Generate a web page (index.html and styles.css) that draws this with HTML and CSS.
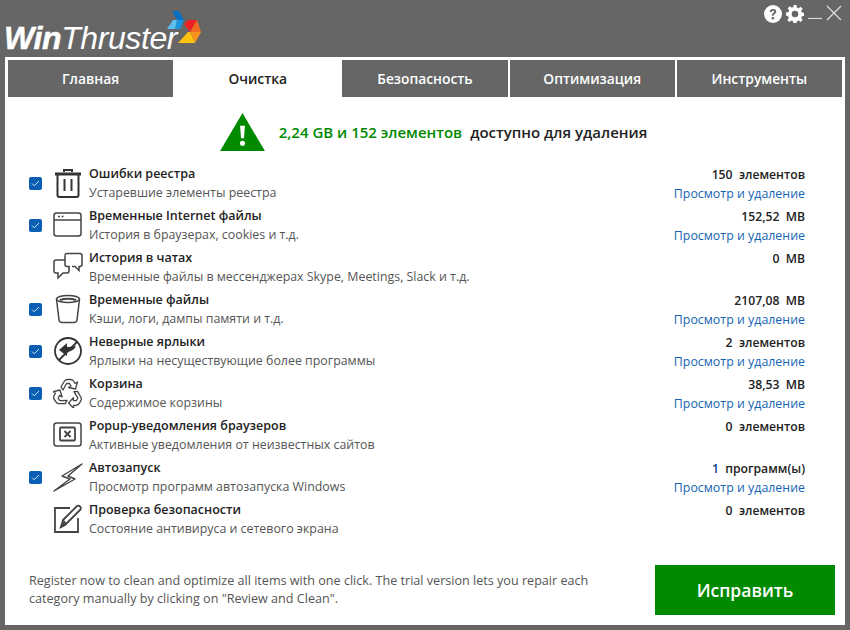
FILE: index.html
```html
<!DOCTYPE html>
<html lang="ru">
<head>
    <meta charset="UTF-8">
    <title>WinThruster</title>
    <link rel="stylesheet" href="styles.css">
</head>
<body>
    <header class="title_bar">
        <div class="logo">
            <span class="logo_text"><b>Win</b>Thruster</span>
            <svg class="logo_mark" width="34" height="33" viewBox="0 0 34 33">
                <polygon points="5,0 12,0 17,9 10,9" fill="#0b6fc0"/>
                <polygon points="10,9 17,9 13,18 8,18" fill="#1b95e0"/>
                <polygon points="0,18 6,9 10,9 8,18" fill="#5cc0ee"/>
                <polygon points="17,13 21,9 30,9 23,21" fill="#ee2024"/>
                <polygon points="30,9 34,21 23,21" fill="#f26a21"/>
                <polygon points="23,21 34,21 28,32" fill="#f7941d"/>
                <polygon points="11,32 21,21 23,21 28,32" fill="#ffc20e"/>
            </svg>
        </div>
        <div class="window_btns">
            <svg width="18" height="18" viewBox="0 0 18 18"><circle cx="9" cy="9" r="9" fill="#fff"/><path d="M5.800 7c0-2 1.400-3 3.300-3s3.200 1 3.200 2.700c0 2.300-2.700 2.200-2.700 4.100H7.900c0-2.800 2.300-2.700 2.300-4 0-.7-.5-1.100-1.200-1.100-.8 0-1.200.5-1.300 1.300z" fill="#666"/><circle cx="8.900" cy="13.300" r="1.300" fill="#666"/></svg>
            <svg width="18" height="18" viewBox="0 0 18 18"><path d="M7.500 0h3l.4 2.500 1.600.7 2.100-1.500 2.100 2.100-1.500 2.100.7 1.600 2.500.4v3l-2.500.4-.7 1.600 1.500 2.100-2.100 2.100-2.100-1.500-1.600.7-.4 2.500h-3l-.4-2.500-1.600-.7-2.100 1.500-2.100-2.100 1.500-2.100-.7-1.600L0 10.500v-3l2.500-.4.7-1.600-1.500-2.100 2.100-2.100 2.100 1.500 1.600-.7z" fill="#fff"/><circle cx="9" cy="9" r="3.300" fill="#666"/></svg>
            <svg width="14" height="14" viewBox="0 0 14 14"><path d="M0 13.500h14" stroke="#ddd" stroke-width="1.200"/></svg>
            <svg width="16" height="16" viewBox="0 0 16 16"><path d="M1 1l14 14M15 1L1 15" stroke="#ddd" stroke-width="1.300"/></svg>
        </div>
    </header>

    <main class="panel">
        <nav class="tabs">
            <div class="tab">Главная</div>
            <div class="tab tab_active">Очистка</div>
            <div class="tab">Безопасность</div>
            <div class="tab">Оптимизация</div>
            <div class="tab">Инструменты</div>
        </nav>

        <div class="summary">
            <svg width="45" height="39" viewBox="0 0 46 40"><polygon points="23,0 46,39 0,39" fill="#008a00"/><path d="M20.500 13h5l-1 13h-3z" fill="#fff"/><circle cx="23" cy="31" r="2.600" fill="#fff"/></svg>
            <span class="summary_count">2,24 GB и 152 элементов</span>
            <span>доступно для удаления</span>
        </div>

        <section class="rows">
            <div class="row">
                <span class="check"><svg width="9" height="7" viewBox="0 0 9 7"><path d="M1 3.500l2.300 2.300L8 1" fill="none" stroke="#cfe3f7" stroke-width="1"/></svg></span>
                <svg class="icon" width="30" height="30" viewBox="0 0 30 30" fill="none" stroke="#333" stroke-width="2"><path d="M2 6h26" stroke-width="3"/><path d="M11 4V2h8v2" stroke-width="2"/><path d="M4.500 7v20q0 2 2 2h17q2 0 2-2V7"/><path d="M11.500 11v12M18.500 11v12"/></svg>
                <div class="row_text"><div class="row_title">Ошибки реестра</div><div class="row_sub">Устаревшие элементы реестра</div></div>
                <div class="row_right"><div class="row_value">150&nbsp; элементов</div><a class="row_link">Просмотр и удаление</a></div>
            </div>
            <div class="row">
                <span class="check"><svg width="9" height="7" viewBox="0 0 9 7"><path d="M1 3.500l2.300 2.300L8 1" fill="none" stroke="#cfe3f7" stroke-width="1"/></svg></span>
                <svg class="icon" width="30" height="30" viewBox="0 0 30 30" fill="none" stroke="#444" stroke-width="1.500"><rect x="1" y="3" width="27" height="23" rx="2.500"/><path d="M1 10h27"/><path d="M5 6.500h2M8.500 6.500h2" stroke-width="1.300"/></svg>
                <div class="row_text"><div class="row_title">Временные Internet файлы</div><div class="row_sub">История в браузерах, cookies и т.д.</div></div>
                <div class="row_right"><div class="row_value">152,52&nbsp; MB</div><a class="row_link">Просмотр и удаление</a></div>
            </div>
            <div class="row">
                <span class="check check_off"></span>
                <svg class="icon" width="30" height="30" viewBox="0 0 30 30" fill="none" stroke="#444" stroke-width="1.500"><path d="M12 3.500q0-2 2-2h13q2 0 2 2v9q0 2-2 2h-1v4l-4-4h-3"/><path d="M12 8H3q-2 0-2 2v9q0 2 2 2h2v5l5-5h4q2 0 2-2v-4" /><path d="M12 3.500v9q0 2 2 2h3"/></svg>
                <div class="row_text"><div class="row_title">История в чатах</div><div class="row_sub">Временные файлы в мессенджерах Skype, Meetings, Slack и т.д.</div></div>
                <div class="row_right"><div class="row_value">0&nbsp; MB</div></div>
            </div>
            <div class="row">
                <span class="check"><svg width="9" height="7" viewBox="0 0 9 7"><path d="M1 3.500l2.300 2.300L8 1" fill="none" stroke="#cfe3f7" stroke-width="1"/></svg></span>
                <svg class="icon" width="30" height="30" viewBox="0 0 30 30" fill="none" stroke="#444" stroke-width="1.500"><path d="M3.500 5l2.500 21q.3 2.500 3 2.500h12q2.700 0 3-2.500l2.500-21"/><ellipse cx="15" cy="5" rx="11.500" ry="3.500"/><path d="M7 6q8-2.500 16 0" stroke-width="2"/></svg>
                <div class="row_text"><div class="row_title">Временные файлы</div><div class="row_sub">Кэши, логи, дампы памяти и т.д.</div></div>
                <div class="row_right"><div class="row_value">2107,08&nbsp; MB</div><a class="row_link">Просмотр и удаление</a></div>
            </div>
            <div class="row">
                <span class="check"><svg width="9" height="7" viewBox="0 0 9 7"><path d="M1 3.500l2.300 2.300L8 1" fill="none" stroke="#cfe3f7" stroke-width="1"/></svg></span>
                <svg class="icon" width="30" height="30" viewBox="0 0 30 30" fill="none" stroke="#333" stroke-width="1.800"><circle cx="15" cy="15" r="13"/><path d="M5.500 24.500l19-19"/><path d="M6 14l8-7v4q5 0 9-1-2 5-9 6v4z" fill="#333" stroke="none"/></svg>
                <div class="row_text"><div class="row_title">Неверные ярлыки</div><div class="row_sub">Ярлыки на несуществующие более программы</div></div>
                <div class="row_right"><div class="row_value">2&nbsp; элементов</div><a class="row_link">Просмотр и удаление</a></div>
            </div>
            <div class="row">
                <span class="check"><svg width="9" height="7" viewBox="0 0 9 7"><path d="M1 3.500l2.300 2.300L8 1" fill="none" stroke="#cfe3f7" stroke-width="1"/></svg></span>
                <svg class="icon" width="30" height="30" viewBox="0 0 30 30" fill="none" stroke="#444" stroke-width="1.300" stroke-linejoin="round">
                    <path d="M8 9l3.500-6q1-1.500 3-1.500h3q2 0 3 1.500l1.500 2.500 2.500-1.500-2 7-7-1.500 2.500-1.500-1.500-2.500h-3L10 12z"/>
                    <path d="M8 9l3.500-6q1-1.500 3-1.500h3q2 0 3 1.500l1.500 2.500 2.500-1.500-2 7-7-1.500 2.500-1.500-1.500-2.500h-3L10 12z" transform="rotate(120 15 16)"/>
                    <path d="M8 9l3.500-6q1-1.500 3-1.500h3q2 0 3 1.500l1.500 2.500 2.500-1.500-2 7-7-1.500 2.500-1.500-1.500-2.500h-3L10 12z" transform="rotate(240 15 16)"/>
                </svg>
                <div class="row_text"><div class="row_title">Корзина</div><div class="row_sub">Содержимое корзины</div></div>
                <div class="row_right"><div class="row_value">38,53&nbsp; MB</div><a class="row_link">Просмотр и удаление</a></div>
            </div>
            <div class="row">
                <span class="check check_off"></span>
                <svg class="icon" width="30" height="30" viewBox="0 0 30 30" fill="none" stroke="#444" stroke-width="1.500"><rect x="1" y="3" width="27" height="23" rx="2.500"/><rect x="7" y="7.500" width="15" height="13" rx="1" stroke-width="1.800"/><path d="M11.500 11l6 6M17.500 11l-6 6" stroke-width="1.800"/></svg>
                <div class="row_text"><div class="row_title">Popup-уведомления браузеров</div><div class="row_sub">Активные уведомления от неизвестных сайтов</div></div>
                <div class="row_right"><div class="row_value">0&nbsp; элементов</div></div>
            </div>
            <div class="row">
                <span class="check"><svg width="9" height="7" viewBox="0 0 9 7"><path d="M1 3.500l2.300 2.300L8 1" fill="none" stroke="#cfe3f7" stroke-width="1"/></svg></span>
                <svg class="icon" width="30" height="30" viewBox="0 0 30 30" fill="none" stroke="#444" stroke-width="1.400" stroke-linejoin="round"><path d="M29 2L9 14l8 3L1 29l21-12-7-3z"/></svg>
                <div class="row_text"><div class="row_title">Автозапуск</div><div class="row_sub">Просмотр программ автозапуска Windows</div></div>
                <div class="row_right"><div class="row_value"><span class="row_num">1</span>&nbsp; программ(ы)</div><a class="row_link">Просмотр и удаление</a></div>
            </div>
            <div class="row">
                <span class="check check_off"></span>
                <svg class="icon" width="30" height="30" viewBox="0 0 30 30" fill="none" stroke="#444" stroke-width="1.800"><path d="M17 4H2v24h23V14"/><path d="M8 23l2-7L24 2q1.500-1 3 .5t.5 3L13 20z" stroke-linejoin="round"/><path d="M10 16l3 4" stroke-width="1.500"/><path d="M8 23l2-4 2 2z" fill="#444"/></svg>
                <div class="row_text"><div class="row_title">Проверка безопасности</div><div class="row_sub">Состояние антивируса и сетевого экрана</div></div>
                <div class="row_right"><div class="row_value">0&nbsp; элементов</div></div>
            </div>
        </section>

        <footer class="bottom">
            <p class="note">Register now to clean and optimize all items with one click. The trial version lets you repair each category manually by clicking on "Review and Clean".</p>
            <button class="fix_btn">Исправить</button>
        </footer>
    </main>
</body>
</html>
```

FILE: styles.css
```css
* {
    box-sizing: border-box;
}

body {
    margin: 0;
    width: 850px;
    height: 630px;
    overflow: hidden;
    background: #666;
    font-family: 'Open Sans', 'Noto Sans', sans-serif;
    font-size: 13px;
    color: #222;
    padding: 0 5px 5px;
}

/* Title bar */
.title_bar {
    height: 57px;
    display: flex;
    justify-content: space-between;
}

.logo {
    display: flex;
    align-items: flex-end;
}

.logo_text {
    font-family: 'Liberation Sans', sans-serif;
    font-style: italic;
    font-size: 32px;
    line-height: 36px;
    letter-spacing: -0.400px;
    margin-left: -1px;
    margin-bottom: 1px;
    color: #fff;
}

.logo_text b {
    -webkit-text-stroke: 0.500px #fff;
}

.logo_mark {
    margin: 0 0 13px -10px;
}

.window_btns {
    display: flex;
    align-items: flex-start;
    gap: 4px;
    padding: 5px 3px 0 0;
}

/* White panel */
.panel {
    height: 568px;
    background: #fff;
    padding: 3px;
}

.tabs {
    display: grid;
    grid-template-columns: repeat(5, 1fr);
    gap: 2px;
}

.tab {
    height: 37px;
    display: flex;
    align-items: center;
    justify-content: center;
    background: #666;
    color: #fff;
    font-size: 13.800px;
    font-weight: 550;
}

.tab_active {
    background: #fff;
    color: #222;
}

.summary {
    display: flex;
    align-items: center;
    justify-content: center;
    height: 42px;
    margin: 14px 0 9px;
    padding-left: 17px;
    font-size: 15px;
    font-weight: 550;
}

.summary svg {
    margin-right: 14px;
}

.summary_count {
    color: #008a00;
    margin-right: 8px;
}

/* Item rows */
.rows {
    padding: 0 37px 0 21px;
}

.row {
    height: 42px;
    display: flex;
    align-items: center;
}

.check {
    width: 13px;
    height: 13px;
    flex: none;
    display: flex;
    align-items: center;
    justify-content: center;
    background: #0a5fb4;
    border-radius: 2px;
    margin-right: 11px;
}

.check_off {
    background: none;
}

.icon {
    flex: none;
    margin-right: 6px;
}

.row_text {
    flex: 1;
}

.row_title {
    font-weight: 550;
    font-size: 12.500px;
    line-height: 18px;
}

.row_sub {
    font-size: 12.400px;
    line-height: 18px;
    padding-top: 1px;
    color: #555;
}

.row_right {
    align-self: flex-start;
    padding-top: 4px;
    text-align: right;
}

.row_value {
    font-size: 12.200px;
    font-weight: 550;
    line-height: 18px;
}

.row_num {
    color: #0a3c8c;
}

.row_link {
    display: block;
    font-size: 12.400px;
    line-height: 19px;
    color: #1464b4;
}

/* Footer */
.bottom {
    display: flex;
    justify-content: space-between;
    align-items: center;
    padding: 0 7px 0 21px;
    margin-top: 25px;
}

.note {
    margin: 0;
    width: 590px;
    font-size: 12.600px;
    line-height: 18px;
    color: #555;
}

.fix_btn {
    width: 180px;
    height: 50px;
    border: 0;
    background: #008a00;
    color: #fff;
    font-family: inherit;
    font-size: 17.500px;
    font-weight: 550;
}
```
